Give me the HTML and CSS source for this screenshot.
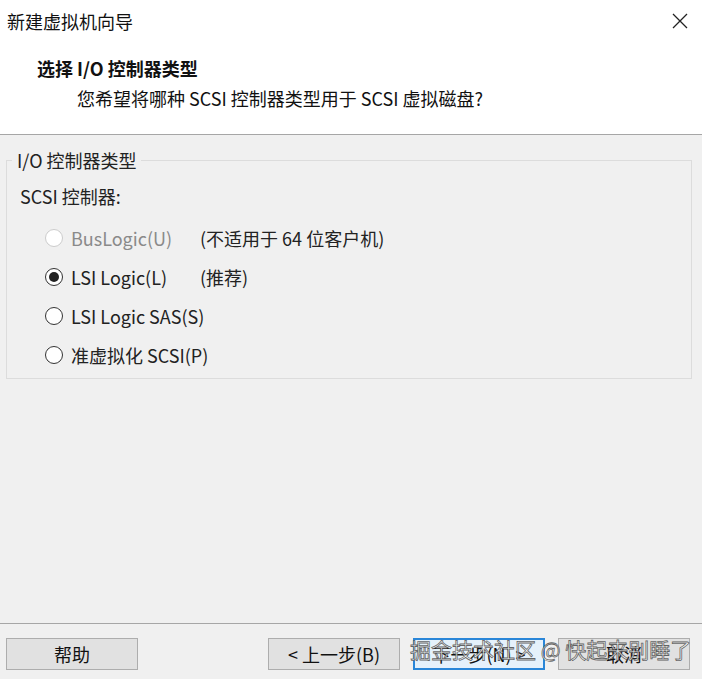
FILE: index.html
```html
<!DOCTYPE html>
<html lang="zh-CN">
<head>
<meta charset="utf-8">
<title>新建虚拟机向导</title>
<link rel="stylesheet" href="styles.css">
</head>
<body>
<div class="window">
  <div class="titlebar">
    <span class="title-text">新建虚拟机向导</span>
    <svg class="close" width="16" height="16" viewBox="0 0 16 16"><path d="M1 1 L15 15 M15 1 L1 15" stroke="#222" stroke-width="1.3" fill="none"/></svg>
  </div>
  <div class="header">
    <div class="header-title">选择 I/O 控制器类型</div>
    <div class="header-sub">您希望将哪种 SCSI 控制器类型用于 SCSI 虚拟磁盘?</div>
  </div>
  <div class="content">
    <fieldset class="group">
      <legend class="legend">I/O 控制器类型</legend>
      <div class="group-label">SCSI 控制器:</div>
      <div class="options">
        <div class="opt disabled"><span class="radio"></span><span class="opt-label">BusLogic(U)</span></div>
        <div class="note">(不适用于 64 位客户机)</div>
        <div class="opt"><span class="radio checked"></span><span class="opt-label">LSI Logic(L)</span></div>
        <div class="note">(推荐)</div>
        <div class="opt wide"><span class="radio"></span><span class="opt-label">LSI Logic SAS(S)</span></div>
        <div class="opt wide"><span class="radio"></span><span class="opt-label">准虚拟化 SCSI(P)</span></div>
      </div>
    </fieldset>
  </div>
  <div class="footer">
    <button class="btn btn-help">帮助</button>
    <div class="btn-group">
      <button class="btn">&lt; 上一步(B)</button>
      <button class="btn btn-primary">下一步(N) &gt;</button>
      <button class="btn">取消</button>
    </div>
    <div class="watermark">掘金技术社区 @ 快起来别睡了</div>
  </div>
</div>
</body>
</html>
```
FILE: styles.css
```css
* { box-sizing: border-box; }
html, body { margin: 0; padding: 0; }
body {
  width: 702px;
  height: 679px;
  overflow: hidden;
  font-family: "Noto Sans CJK SC", "Noto Sans", sans-serif;
  font-size: 18px;
  color: #1a1a1a;
  background: #f0f0f0;
}
.window {
  width: 702px;
  height: 679px;
  display: flex;
  flex-direction: column;
  position: relative;
}
.titlebar {
  height: 42px;
  background: #fff;
  display: flex;
  align-items: center;
  justify-content: space-between;
  padding: 0 14px 0 7px;
}
.title-text { font-size: 18px; line-height: 1; color: #111; }
.close { display: block; }
.header {
  height: 93px;
  background: #fff;
  border-bottom: 1px solid #a6a6a6;
  padding: 12px 0 0 37px;
}
.header-title {
  font-weight: bold;
  font-size: 18px;
  line-height: 28px;
  color: #111;
}
.header-sub {
  padding-left: 40px;
  font-size: 18px;
  line-height: 32px;
  color: #111;
}
.content {
  flex: 1;
  padding: 12px 10px 0 6px;
}
.group {
  margin: 0;
  padding: 0 0 8px 13px;
  border: 1px solid #dcdcdc;
  height: 232px;
}
.legend {
  padding: 0 4px 0 5px;
  margin-left: -8px;
  font-size: 18px;
  line-height: 26px;
  color: #222;
}
.group-label {
  margin-top: 10px;
  line-height: 26px;
  color: #222;
}
.options {
  display: grid;
  grid-template-columns: 155px 1fr;
  grid-auto-rows: 39px;
  margin-top: 9px;
  padding-left: 25px;
  align-items: center;
}
.opt {
  display: flex;
  align-items: center;
  gap: 8px;
  color: #222;
  white-space: nowrap;
}
.opt.wide { grid-column: 1 / span 2; }
.radio {
  width: 18px;
  height: 18px;
  border: 1.5px solid #333;
  border-radius: 50%;
  background: #fff;
  display: flex;
  align-items: center;
  justify-content: center;
  flex: none;
}
.radio.checked::after {
  content: "";
  width: 10px;
  height: 10px;
  border-radius: 50%;
  background: #222;
}
.opt.disabled .radio { border-color: #cccccc; }
.opt.disabled .opt-label { color: #8a8a8a; }
.note { color: #222; white-space: nowrap; }
.footer {
  height: 56px;
  border-top: 1px solid #a6a6a6;
  display: flex;
  align-items: flex-start;
  justify-content: space-between;
  padding: 14px 12px 0 6px;
  position: relative;
}
.btn-group { display: flex; gap: 13px; }
.btn {
  width: 132px;
  height: 32px;
  font-family: "Noto Sans CJK SC", "Noto Sans", sans-serif;
  font-size: 18px;
  color: #111;
  background: #e1e1e1;
  border: 1px solid #adadad;
  padding: 0;
}
.btn-primary {
  background: #e5f1fb;
  border: 2px solid #2a86d8;
}
.watermark {
  position: absolute;
  left: 410px;
  top: 10px;
  font-size: 21px;
  line-height: 30px;
  color: rgba(255, 255, 255, 0.85);
  -webkit-text-stroke: 0.8px rgba(60, 60, 60, 0.8);
  white-space: nowrap;
  pointer-events: none;
}
```
